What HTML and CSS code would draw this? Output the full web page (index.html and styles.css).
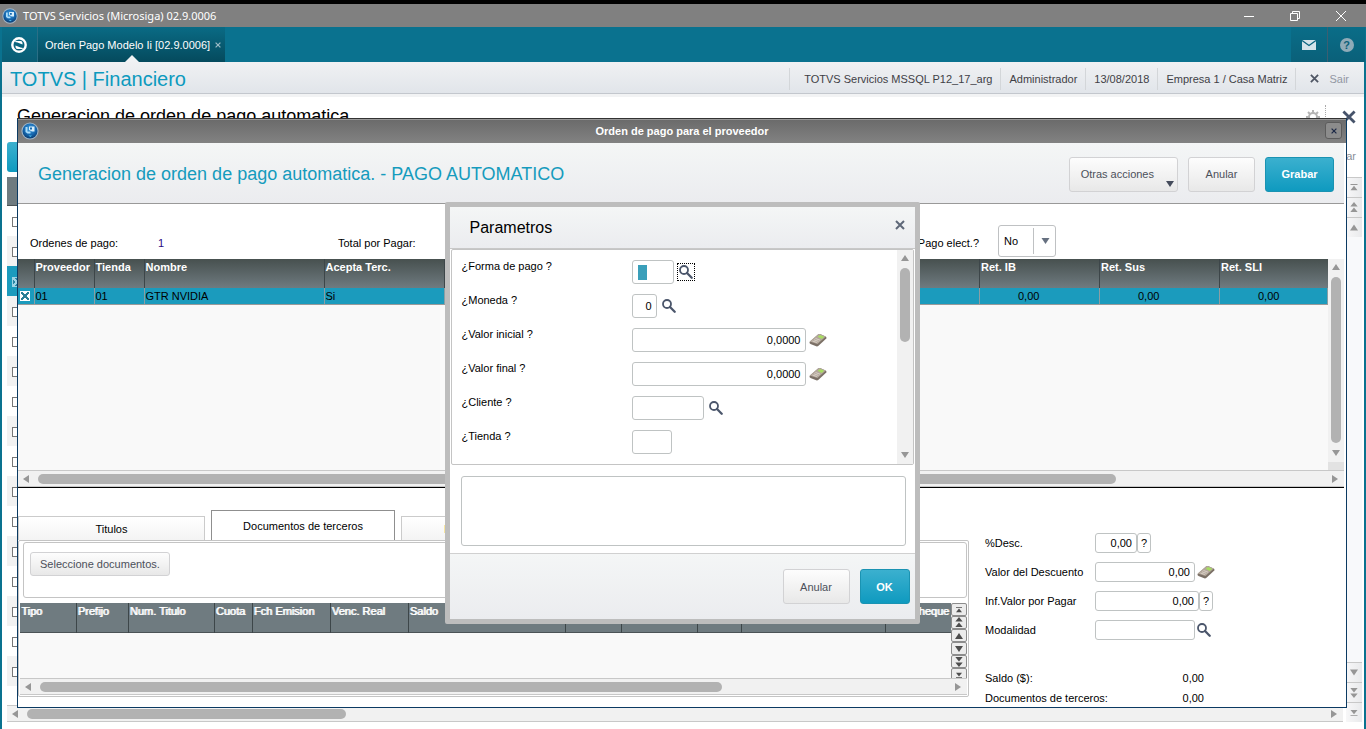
FILE: index.html
```html
<!DOCTYPE html>
<html lang="es">
<head>
<meta charset="utf-8">
<title>TOTVS Servicios (Microsiga) 02.9.0006</title>
<link rel="stylesheet" href="styles.css">
</head>
<body>
<svg class="defs" aria-hidden="true">
  <defs>
    <radialGradient id="orb" cx="50%" cy="35%" r="65%"><stop offset="0" stop-color="#3f9fe0"/><stop offset="0.6" stop-color="#1668b0"/><stop offset="1" stop-color="#0a3c72"/></radialGradient>
    <symbol id="i-logo" viewBox="0 0 18 18"><circle cx="9" cy="9" r="8.6" fill="#9fb4c6"/><circle cx="9" cy="9" r="7.5" fill="url(#orb)"/><path d="M4.500 5h2v4.500h3v2H6.500L4.500 10z" fill="#a9dcfa"/><path d="M8 4.500h5.500v5H11L8 8z" fill="#d6eefc"/><path d="M9 5.500h2v2H9z" fill="#1668b0"/><path d="M7.500 13.500h3.500L9.300 15z" fill="#45c0f5"/></symbol>
    <symbol id="i-search" viewBox="0 0 14 14"><circle cx="5" cy="5" r="4" fill="none" stroke="#4b566b" stroke-width="1.800"/><path d="M8 8l4.700 4.700" stroke="#4b566b" stroke-width="2.300" stroke-linecap="round"/></symbol>
    <symbol id="i-calc" viewBox="0 0 18 14"><path d="M0.500 9L9 1.500q1-0.800 2-0.400L17 3.800q0.800 0.600 0.300 1.700L9.500 12.800q-1 0.800-2.300 0.500L1.500 11Q0.300 10.300 0.500 9z" fill="#7b7066"/><path d="M0.700 8.500L9 1.500q1-0.800 2-0.400l5.800 2.500L8.500 11z" fill="#b3a79b"/><path d="M8.600 3.700L11 2l4.300 1.700-2.600 2.200z" fill="#a8dc62"/><path d="M3.500 8l4.300 1.500M5 6.800l4.400 1.600M6.500 5.500l4.500 1.700" stroke="#e2dad2" stroke-width="0.800"/></symbol>
    <symbol id="i-up" viewBox="0 0 8 6"><path d="M4 0l4 6H0z"/></symbol>
    <symbol id="i-down" viewBox="0 0 8 6"><path d="M0 0h8L4 6z"/></symbol>
    <symbol id="i-left" viewBox="0 0 6 8"><path d="M6 0v8L0 4z"/></symbol>
    <symbol id="i-right" viewBox="0 0 6 8"><path d="M0 0l6 4-6 4z"/></symbol>
    <symbol id="i-up2" viewBox="0 0 8 12"><path d="M4 0l4 5H0zM4 6l4 5H0z"/></symbol>
    <symbol id="i-down2" viewBox="0 0 8 12"><path d="M0 1h8L4 6zM0 7h8l-4 5z"/></symbol>
    <symbol id="i-first" viewBox="0 0 8 8"><path d="M0 0h8v1H0zM4 2l4 5H0z"/></symbol>
    <symbol id="i-last" viewBox="0 0 8 8"><path d="M0 1h8L4 6zM0 7h8v1H0z"/></symbol>
    <symbol id="i-x" viewBox="0 0 10 10"><path d="M1 1l8 8M9 1l-8 8" fill="none" stroke="currentColor" stroke-width="2"/></symbol>
  </defs>
</svg>

<div class="app">
  <header class="titlebar">
    <svg class="logo"><use href="#i-logo"/></svg>
    <span class="titlebar-text">TOTVS Servicios (Microsiga) 02.9.0006</span>
    <button class="win-btn" aria-label="Minimizar"><svg viewBox="0 0 12 12"><path d="M1 6.500h10"/></svg></button>
    <button class="win-btn" aria-label="Restaurar"><svg viewBox="0 0 12 12"><path d="M1.500 3.500h7v7h-7zM3.500 3.500v-2h7v7h-2"/></svg></button>
    <button class="win-btn" aria-label="Cerrar"><svg viewBox="0 0 12 12"><path d="M1 1l10 10M11 1L1 11"/></svg></button>
  </header>

  <nav class="tabbar">
    <button class="home" aria-label="Inicio"><svg viewBox="0 0 18 18"><circle cx="9" cy="9" r="6.700" fill="none" stroke="#fff" stroke-width="2.400"/><path d="M5 6q0-1 1-1h4.500q2 0 2 2v1.500L7.500 6.500zM13 12q0 1-1 1H7.500q-2 0-2-2V9.500l5 2z" fill="#fff"/></svg></button>
    <a class="app-tab" href="#">Orden Pago Modelo Ii [02.9.0006]<svg class="tab-x"><use href="#i-x"/></svg></a>
    <span class="grow"></span>
    <button class="bar-btn" aria-label="Mensajes"><svg viewBox="0 0 14 10"><path d="M0 0h14v10H0z" fill="#d5e3ea"/><path d="M0 0.500l7 5 7-5" fill="none" stroke="#0b6580" stroke-width="1.300"/></svg></button>
    <button class="bar-btn help" aria-label="Ayuda"><span>?</span></button>
  </nav>

  <div class="frame">
    <div class="module">
      <h1>TOTVS | Financiero</h1>
      <ul class="status">
        <li>TOTVS Servicios MSSQL P12_17_arg</li><li>Administrador</li><li>13/08/2018</li><li>Empresa 1 / Casa Matriz</li>
        <li class="exit"><button><svg><use href="#i-x"/></svg>Sair</button></li>
      </ul>
    </div>

    <main class="workspace">
      <div class="page-head">
        <h2>Generacion de orden de pago automatica</h2>
        <button class="gear" aria-label="Configurar"><svg viewBox="0 0 14 14"><circle cx="7" cy="7" r="4" fill="none" stroke="#b4b4b4" stroke-width="2"/><path d="M7 0v3M7 11v3M0 7h3M11 7h3M2 2l2 2M10 10l2 2M12 2l-2 2M4 10l-2 2" stroke="#b4b4b4" stroke-width="2"/></svg></button>
        <button class="page-x" aria-label="Cerrar"><svg><use href="#i-x"/></svg></button>
      </div>
      <div class="page-tools"><button class="primary" aria-label="Pago automatico"></button><span>Buscar</span></div>
      <div class="page-grid">
        <div class="page-main">
          <div class="page-rows">
            <div class="ph"></div>
            <div class="pr"><input type="checkbox" aria-label="Fila 1"></div>
            <div class="pr"><input type="checkbox" aria-label="Fila 2"></div>
            <div class="pr on"><input type="checkbox" checked aria-label="Fila 3"></div>
            <div class="pr"><input type="checkbox" aria-label="Fila 4"></div>
            <div class="pr"><input type="checkbox" aria-label="Fila 5"></div>
            <div class="pr"><input type="checkbox" aria-label="Fila 6"></div>
            <div class="pr"><input type="checkbox" aria-label="Fila 7"></div>
            <div class="pr"><input type="checkbox" aria-label="Fila 8"></div>
            <div class="pr"><input type="checkbox" aria-label="Fila 9"></div>
            <div class="pr"><input type="checkbox" aria-label="Fila 10"></div>
            <div class="pr"><input type="checkbox" aria-label="Fila 11"></div>
            <div class="pr"><input type="checkbox" aria-label="Fila 12"></div>
            <div class="pr"><input type="checkbox" aria-label="Fila 13"></div>
            <div class="pr"><input type="checkbox" aria-label="Fila 14"></div>
            <div class="pr"><input type="checkbox" aria-label="Fila 15"></div>
            <div class="pr"><input type="checkbox" aria-label="Fila 16"></div>
          </div>
          <div class="hbar"><svg><use href="#i-left"/></svg><div class="track"><i class="thumb" style="width:24.6%"></i></div><svg><use href="#i-right"/></svg></div>
        </div>
        <div class="pager">
          <button aria-label="Primero"><svg><use href="#i-first"/></svg></button>
          <button aria-label="Pagina anterior"><svg class="tall"><use href="#i-up2"/></svg></button>
          <button aria-label="Anterior"><svg><use href="#i-up"/></svg></button>
          <span class="grow"></span>
          <button aria-label="Siguiente"><svg><use href="#i-down"/></svg></button>
          <button aria-label="Pagina siguiente"><svg class="tall"><use href="#i-down2"/></svg></button>
          <button aria-label="Ultimo"><svg><use href="#i-last"/></svg></button>
        </div>
      </div>

      <section class="window" aria-label="Orden de pago para el proveedor">
        <header class="window-bar">
          <svg class="logo"><use href="#i-logo"/></svg>
          <h2>Orden de pago para el proveedor</h2>
          <button aria-label="Cerrar"><svg><use href="#i-x"/></svg></button>
        </header>
        <div class="window-body">
          <div class="window-head">
            <h3>Generacion de orden de pago automatica. - PAGO AUTOMATICO</h3>
            <button class="btn more">Otras acciones<svg><use href="#i-down"/></svg></button>
            <button class="btn">Anular</button>
            <button class="btn primary">Grabar</button>
          </div>

          <div class="summary">
            <span class="s-label">Ordenes de pago:</span><span class="s-count">1</span><span class="s-total">Total por Pagar:</span>
            <label for="elect">Pago elect.?</label>
            <span class="select"><select id="elect"><option>No</option><option>Si</option></select><svg><use href="#i-down"/></svg></span>
          </div>

          <div class="orders">
            <div class="orders-table">
              <table>
                <colgroup><col class="c16"><col class="c60"><col class="c50"><col class="c180"><col class="c120"><col><col class="c120"><col class="c120"><col class="c108"></colgroup>
                <thead><tr><th></th><th>Proveedor</th><th>Tienda</th><th>Nombre</th><th>Acepta Terc.</th><th></th><th>Ret. IB</th><th>Ret. Sus</th><th>Ret. SLI</th></tr></thead>
                <tbody><tr><td><input type="checkbox" checked aria-label="Seleccionar 01"></td><td>01</td><td>01</td><td>GTR NVIDIA</td><td>Si</td><td></td><td class="num">0,00</td><td class="num">0,00</td><td class="num">0,00</td></tr></tbody>
              </table>
            </div>
            <div class="vbar cut"><svg><use href="#i-up"/></svg><div class="track"><i class="thumb" style="height:100%"></i></div><svg><use href="#i-down"/></svg></div>
          </div>
          <div class="hbar"><svg><use href="#i-left"/></svg><div class="track"><i class="thumb" style="width:83.9%"></i></div><svg><use href="#i-right"/></svg></div>

          <div class="lower">
            <div class="docs">
              <div class="tabs"><button>Titulos</button><button class="on">Documentos de terceros</button><button class="warn">Pagos</button></div>
              <div class="panel">
                <div class="box"><button class="btn small">Seleccione documentos.</button></div>
                <div class="docs-grid">
                  <div class="docs-table">
                    <table>
                      <colgroup><col class="d56"><col class="d52"><col class="d86"><col class="d38"><col class="d78"><col class="d78"><col><col class="d56"><col class="d76"><col class="d44"><col class="d144"><col class="d66"></colgroup>
                      <thead><tr><th>Tipo</th><th>Prefijo</th><th>Num. Titulo</th><th>Cuota</th><th>Fch Emision</th><th>Venc. Real</th><th>Saldo</th><th></th><th></th><th></th><th></th><th>Nro. Cheque</th></tr></thead>
                    </table>
                  </div>
                  <div class="stepper">
                    <button aria-label="Primero"><svg><use href="#i-first"/></svg></button>
                    <button aria-label="Pagina anterior"><svg class="tall"><use href="#i-up2"/></svg></button>
                    <button aria-label="Anterior"><svg><use href="#i-up"/></svg></button>
                    <button aria-label="Siguiente"><svg><use href="#i-down"/></svg></button>
                    <button aria-label="Pagina siguiente"><svg class="tall"><use href="#i-down2"/></svg></button>
                    <button aria-label="Ultimo"><svg><use href="#i-last"/></svg></button>
                  </div>
                </div>
                <div class="hbar"><svg><use href="#i-left"/></svg><div class="track"><i class="thumb" style="width:75.3%"></i></div><svg><use href="#i-right"/></svg></div>
              </div>
            </div>

            <form class="totals">
              <div class="t-row"><label for="desc">%Desc.</label><input id="desc" class="w42" value="0,00"><button type="button" class="q">?</button></div>
              <div class="t-row"><label for="vdesc">Valor del Descuento</label><input id="vdesc" class="w100" value="0,00"><svg class="calc"><use href="#i-calc"/></svg></div>
              <div class="t-row"><label for="inf">Inf.Valor por Pagar</label><input id="inf" class="w104" value="0,00"><button type="button" class="q">?</button></div>
              <div class="t-row"><label for="mod">Modalidad</label><input id="mod" class="w100"><svg class="search"><use href="#i-search"/></svg></div>
              <dl><dt>Saldo ($):</dt><dd>0,00</dd><dt>Documentos de terceros:</dt><dd>0,00</dd></dl>
            </form>
          </div>
        </div>

        <div class="overlay">
          <div class="modal" role="dialog" aria-label="Parametros">
            <header><h3>Parametros</h3><button aria-label="Cerrar"><svg><use href="#i-x"/></svg></button></header>
            <div class="params">
              <div class="fields">
                <div class="f-row"><label for="p1">¿Forma de pago ?</label><span class="hold"><input id="p1" class="w42"><i class="selection"></i></span><button class="look focus" aria-label="Buscar forma de pago"><svg class="search"><use href="#i-search"/></svg></button></div>
                <div class="f-row"><label for="p2">¿Moneda ?</label><input id="p2" class="w25" value="0"><button class="look" aria-label="Buscar moneda"><svg class="search"><use href="#i-search"/></svg></button></div>
                <div class="f-row"><label for="p3">¿Valor inicial ?</label><input id="p3" class="w174" value="0,0000"><button class="look" aria-label="Calculadora"><svg class="calc"><use href="#i-calc"/></svg></button></div>
                <div class="f-row"><label for="p4">¿Valor final ?</label><input id="p4" class="w174" value="0,0000"><button class="look" aria-label="Calculadora"><svg class="calc"><use href="#i-calc"/></svg></button></div>
                <div class="f-row"><label for="p5">¿Cliente ?</label><input id="p5" class="w72"><button class="look" aria-label="Buscar cliente"><svg class="search"><use href="#i-search"/></svg></button></div>
                <div class="f-row"><label for="p6">¿Tienda ?</label><input id="p6" class="w40"></div>
              </div>
              <div class="vbar"><svg><use href="#i-up"/></svg><div class="track"><i class="thumb" style="height:42%"></i></div><svg><use href="#i-down"/></svg></div>
            </div>
            <textarea aria-label="Ayuda del parametro"></textarea>
            <footer><button class="btn">Anular</button><button class="btn primary ok">OK</button></footer>
          </div>
        </div>
      </section>
    </main>
  </div>
</div>
</body>
</html>
```

FILE: styles.css
```css
* { box-sizing: border-box; }
body { margin: 0; font: 11px/14px "Liberation Sans", Arial, sans-serif; color: #000; background: #fff; }
h1, h2, h3, ul, dl, dd { margin: 0; padding: 0; font-weight: normal; }
button, input, select, textarea { font: inherit; color: inherit; margin: 0; padding: 0; border-radius: 0; }
button { border: 0; background: none; display: flex; align-items: center; justify-content: center; }
input, textarea { border: 1px solid #bfc3c3; border-radius: 3px; background: #fff; }
svg { display: block; flex: none; fill: #969696; }
.defs { position: absolute; width: 0; height: 0; }
.grow { flex: 1; }

.app { display: flex; flex-direction: column; height: 100vh; min-height: 729px; border-top: 4px solid #000; }
.titlebar { display: flex; align-items: center; flex: none; height: 23px; padding: 0 2px; background: #808080; color: #fff; }
.logo { width: 16px; height: 16px; }
.titlebar-text { flex: 1; padding-left: 5px; font: 11px/16px "Noto Sans", "Open Sans", sans-serif; }
.win-btn { width: 46px; height: 20px; }
.win-btn svg { width: 12px; height: 12px; fill: none; stroke: #fff; }

.tabbar { display: flex; flex: none; height: 35px; padding: 0 1px 0 2px; background: #0a728f; }
.home { width: 36px; padding-right: 2px; border-right: 1px solid #2b6f86; background: linear-gradient(#0a6d88, #0a5d74); }
.home svg { width: 18px; height: 18px; }
.app-tab { position: relative; display: flex; align-items: center; gap: 5px; padding: 0 4px 0 7px; background: linear-gradient(#0a6b85, #054a5d); color: #fff; text-decoration: none; }
.app-tab::after { content: ""; position: absolute; left: 50%; bottom: 0; margin-left: -7px; border: 7px solid transparent; border-top: 0; border-bottom-color: #f0f2f4; }
.tab-x { width: 6px; height: 6px; color: #9dbcc6; }
.bar-btn { width: 37px; background: linear-gradient(#0a6d88, #0a6079); border-right: 1px solid #3b5f72; }
.bar-btn svg { width: 14px; height: 10px; }
.bar-btn:last-child { border-right: 0; }
.help span { width: 14px; height: 14px; border-radius: 7px; background: #8fabb8; color: #0b6079; font-weight: bold; }

.frame { display: flex; flex-direction: column; flex: 1; min-height: 0; border: solid #0a728f; border-width: 0 2px; }
.module { display: flex; align-items: center; justify-content: space-between; flex: none; height: 32px; padding: 2px 0 0 8px; border-bottom: 1px solid #c3c7cd; background: linear-gradient(#f0f1f3, #e1e5ea); }
.module h1 { font-size: 20px; line-height: 28px; color: #0c9abe; }
.status { display: flex; list-style: none; color: #3f3f46; }
.status li { padding: 4px 8px; border-left: 1px solid #d3d6d9; }
.status li:first-child { padding-left: 14px; }
.status .exit { padding: 4px 15px 4px 14px; }
.exit button { gap: 10px; color: #9297a3; }
.exit svg { width: 9px; height: 9px; color: #4f5664; }

.workspace { position: relative; display: flex; flex-direction: column; flex: 1; min-height: 0; padding: 0 2px 7px 5px; border-top: 3px solid #f2f3f4; }
.page-head { display: flex; align-items: flex-start; flex: none; height: 45px; padding: 8px 6px 0 10px; }
.page-head h2 { flex: 1; font-size: 18px; line-height: 22px; }
.gear { align-items: flex-start; width: 20px; height: 30px; padding: 5px 6px 0 0; border-right: 1px dotted #aaa; }
.gear svg { width: 14px; height: 14px; }
.page-x { width: 30px; height: 24px; justify-content: flex-end; }
.page-x svg { width: 14px; height: 14px; color: #46536a; }
.page-tools { display: flex; justify-content: space-between; flex: none; height: 35px; padding-right: 6px; line-height: 28px; color: #8a8f99; }
.page-tools .primary { width: 80px; height: 30px; border-radius: 3px; background: linear-gradient(#3bb0cf, #0f9abf); }
.page-grid { display: flex; gap: 3px; flex: 1; min-height: 0; }
.page-main { display: flex; flex-direction: column; flex: 1; min-width: 0; }
.page-rows { flex: 1; min-height: 0; overflow: hidden; }
.ph { height: 29px; background: #6f7b80; border-bottom: 1px solid #4b5356; }
.pr { height: 30px; padding: 11px 5px; }
.pr:nth-child(odd) { background: #f2f2f2; }
.pr.on { background: #1b9bbd; }
.pr input { appearance: none; display: block; width: 10px; height: 10px; border: 1px solid #777; border-radius: 0; background: #fff; }
.pr.on input { background: linear-gradient(45deg, transparent 42%, #9fd4e4 42% 58%, transparent 58%), linear-gradient(-45deg, #2b86a3 42%, #9fd4e4 42% 58%, #2b86a3 58%); border-color: #9fd4e4; }
.pager { display: flex; flex-direction: column; width: 16px; background: #f8f9fb; }
.pager button { height: 20px; border-top: 1px solid #c8c8c8; background: linear-gradient(90deg, #f7f7f8, #e9eaec); }
.pager svg, .stepper svg { width: 8px; height: 7px; }
.pager svg.tall, .stepper svg.tall { height: 11px; }

.hbar { display: flex; align-items: center; flex: none; height: 17px; padding: 0 6px 0 5px; gap: 9px; border: solid #c8c8c8; border-width: 1px 0; background: #f1f1f1; }
.hbar svg { width: 6px; height: 8px; }
.hbar .track { flex: 1; }
.hbar .thumb { display: block; height: 10px; border-radius: 5px; background: #b2b2b2; }
.vbar { display: flex; flex-direction: column; align-items: center; flex: none; width: 16px; padding: 5px 0 6px; gap: 7px; background: #f1f1f1; }
.vbar svg { width: 8px; height: 6px; }
.vbar .track { flex: 1; }
.vbar .thumb { display: block; width: 10px; border-radius: 5px; background: #b2b2b2; }
.vbar.cut { border-bottom: 8px solid #e2e2e2; }

.window { position: absolute; top: 21px; right: 17px; bottom: 21px; left: 15px; display: flex; flex-direction: column; border: 1px solid #0b3a62; border-top-color: #333; background: #fff; }
.window-bar { display: flex; align-items: center; flex: none; height: 24px; padding: 0 4px 2px 3px; border-top: 1px solid #999; background: linear-gradient(#6b6b6b, #828282); }
.window-bar h2 { flex: 1; text-align: center; font-size: 11px; font-weight: bold; color: #fff; }
.window-bar .logo { width: 18px; height: 18px; }
.window-bar button { width: 17px; height: 17px; border: 1px solid #5c5c5c; border-radius: 3px; background: #8c8c8c; color: #1d2a47; }
.window-bar button svg { width: 6px; height: 6px; }
.window-body { display: flex; flex-direction: column; flex: 1; min-height: 0; padding-right: 2px; }
.window-head { display: flex; align-items: center; gap: 10px; flex: none; height: 61px; padding: 2px 10px 0 20px; border-bottom: 1px solid #999; background: linear-gradient(#f4f6f6, #ebecef); }
.window-head h3 { flex: 1; font-size: 18px; line-height: 22px; color: #159bbd; }

.btn { height: 35px; min-width: 67px; padding: 0 11px; border: 1px solid #d2d2d4; border-radius: 3px; background: linear-gradient(#fdfdfd, #e8e8e8); color: #4c505a; }
.btn.primary { min-width: 69px; border-color: #1a93b2; background: linear-gradient(#3bb0cf, #0f9abf); color: #fff; font-weight: bold; }
.btn.ok { min-width: 50px; }
.btn.small { height: 24px; padding: 0 9px; }
.btn.more { position: relative; min-width: 109px; padding-right: 23px; }
.more svg { position: absolute; right: 2px; bottom: 4px; width: 10px; height: 6px; fill: #454c5c; }

.summary { display: flex; align-items: center; flex: none; height: 55px; padding: 22px 288px 0 12px; }
.s-label { width: 128px; }
.s-count { width: 180px; color: #2a0a80; }
.s-total { flex: 1; }
.summary label { padding-right: 19px; }
.select { position: relative; width: 58px; height: 32px; border: 1px solid #bfc1c3; border-radius: 3px; margin-top: -3px; }
.select::before { content: ""; position: absolute; left: 34px; top: 2px; bottom: 2px; border-left: 1px solid #bfc1c3; }
.select select { appearance: none; width: 100%; height: 100%; padding-left: 5px; border: 0; background: none; }
.select svg { position: absolute; right: 5px; top: 12px; width: 9px; height: 6px; fill: #667080; }

table { width: 100%; table-layout: fixed; border-collapse: collapse; }
th, td { padding: 0 0 0 1px; text-align: left; white-space: nowrap; }
th { height: 29px; padding-top: 1px; vertical-align: top; line-height: 15px; color: #fff; border-right: 1px solid #3d4649; }
th:last-child, td:last-child { border-right: 0; }
.orders { display: flex; flex: 1; min-height: 0; }
.orders-table { flex: 1; min-width: 0; overflow: hidden; background: #f9f9f9; }
.orders thead { background: linear-gradient(#47504f, #6f7b80); }
.orders tbody { background: #1b9bbd; }
.orders td { height: 16px; border-right: 1px solid #8a9ea4; border-bottom: 1px solid #9a9a9a; }
.orders td.num { padding-left: 38px; }
.orders td input { appearance: none; display: block; width: 10px; height: 10px; margin-left: 1px; border: 1px solid #fff; border-radius: 0; background: linear-gradient(45deg, transparent 42%, #2b7f96 42% 58%, transparent 58%), linear-gradient(-45deg, #fff 42%, #2b7f96 42% 58%, #fff 58%); }
.c16 { width: 16px; }
.c50 { width: 50px; }
.c60 { width: 60px; }
.c108 { width: 108px; }
.c120 { width: 120px; }
.c180 { width: 180px; }
.d38 { width: 38px; }
.d44 { width: 44px; }
.d52 { width: 52px; }
.d56 { width: 56px; }
.d66 { width: 66px; }
.d76 { width: 76px; }
.d78 { width: 78px; }
.d86 { width: 86px; }
.d144 { width: 144px; }

.lower { display: flex; gap: 16px; flex: none; height: 220px; padding-top: 22px; border-top: 1px solid #000; }
.docs { display: flex; flex-direction: column; flex: 1; min-width: 0; margin-bottom: 10px; }
.tabs { display: flex; align-items: flex-end; gap: 6px; }
.tabs button { width: 187px; height: 24px; border: 1px solid #cbcbcb; border-bottom: 0; background: linear-gradient(#fff, #f4f4f4); }
.tabs button.on { width: 184px; height: 30px; border-color: #8f8f8f; background: #fff; }
.tabs button.warn { width: 117px; color: #f19a2e; }
.panel { display: flex; flex-direction: column; flex: 1; min-height: 0; padding: 1px; border: 1px solid #c4c4c4; border-radius: 2px; }
.box { height: 56px; margin: 0 0 5px 3px; padding: 9px 6px; border: 1px solid #c4c4c4; border-radius: 3px; }
.docs-grid { display: flex; flex: 1; min-height: 0; }
.docs-table { flex: 1; min-width: 0; background: #f9f9f9; }
.docs thead { background: #6f7b80; border-bottom: 1px solid #4b5356; }
.docs th { font-weight: normal; text-shadow: 1px 0 0 #fff; overflow: hidden; }
.stepper { display: flex; flex-direction: column; width: 16px; overflow: hidden; background: #f1f1f1; }
.stepper button { flex: none; height: 13px; border: 1px solid #8c8c8c; border-radius: 2px; background: #ececec; }
.stepper svg { height: 6px; fill: #4d4d4d; }

.totals { display: flex; flex-direction: column; gap: 5px; flex: none; width: 359px; padding-top: 21px; }
.t-row { display: flex; align-items: center; flex: none; height: 24px; }
.t-row label { width: 110px; }
.t-row input { height: 20px; padding-right: 4px; text-align: right; }
.q { width: 14px; height: 20px; border: 1px solid #bfc3c3; border-radius: 3px; background: #fff; }
.t-row svg { margin-left: 2px; }
.w25 { width: 25px; }
.w40 { width: 40px; }
.w42 { width: 42px; }
.w72 { width: 72px; }
.w100 { width: 100px; }
.w104 { width: 104px; }
.w174 { width: 174px; }
.calc { width: 18px; height: 14px; }
.search { width: 14px; height: 14px; }
.totals dl { display: grid; grid-template-columns: 150px 69px; row-gap: 6px; padding-top: 24px; }
.totals dd { text-align: right; }

.overlay { position: absolute; inset: 0; display: grid; place-items: center; }
.modal { display: flex; flex-direction: column; width: 475px; border: 5px solid #bdbdbd; border-radius: 2px; background: #fff; }
.modal header { display: flex; justify-content: space-between; height: 42px; padding: 9px 10px 0 20px; border-bottom: 1px solid #c8c8c8; background: linear-gradient(#f4f6f6, #ebecef); }
.modal h3 { font-size: 16px; line-height: 24px; }
.modal header button { height: 18px; }
.modal header svg { width: 10px; height: 10px; color: #5f6878; }
.params { display: flex; height: 216px; margin: 0 1px; border: 1px solid #c4c4c4; border-radius: 2px; }
.fields { flex: 1; padding: 10px; }
.f-row { display: flex; align-items: flex-start; height: 34px; }
.f-row label { width: 170px; line-height: 12px; }
.f-row input { display: block; height: 24px; padding-right: 4px; text-align: right; }
.hold { position: relative; }
.selection { position: absolute; left: 6px; top: 5px; width: 9px; height: 15px; background: #3a9fba; }
.look { height: 24px; min-width: 18px; margin-left: 3px; }
.look.focus { height: 18px; margin-top: 3px; border: 1px dotted #000; }
.modal textarea { display: block; height: 70px; margin: 11px 9px 7px 11px; resize: none; }
.modal footer { display: flex; justify-content: flex-end; gap: 10px; height: 66px; padding: 15px 5px 0 0; border-top: 1px solid #d0d0d0; background: linear-gradient(#f4f6f6, #ebecef); }
```
